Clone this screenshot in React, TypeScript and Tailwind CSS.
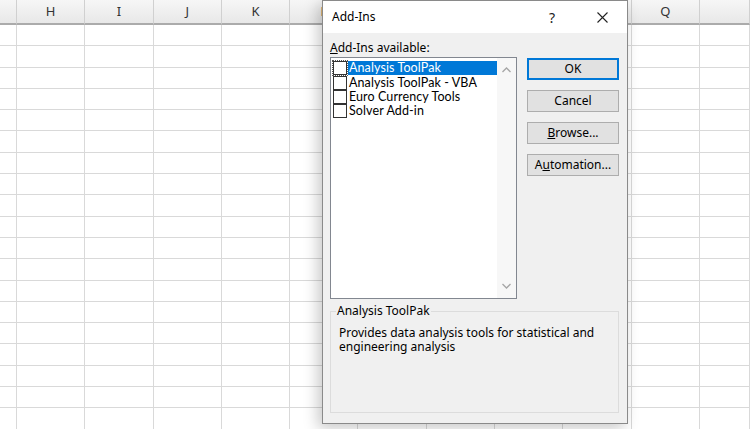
const cols = ["G", "H", "I", "J", "K", "L", "M", "N", "O", "P", "Q", "R"];
const rows = Array.from({ length: 19 }, (_, i) => i);

const items = ["Analysis ToolPak", "Analysis ToolPak - VBA", "Euro Currency Tools", "Solver Add-in"];

function Sheet() {
    return (
        <div className="grid grid-cols-[17px_repeat(10,68.3px)_1fr] auto-rows-[21.3px] grid-rows-[25px]">
            {cols.map((c, i) => (
                <div
                    key={c}
                    className="h-[25px] flex items-center justify-center bg-gradient-to-b from-[#f6f6f6] to-[#e8e8e8] border-r border-[#d0d0d0] border-b-2 border-b-[#ababab] text-[13px] text-[#333]"
                >
                    {i > 0 && i < 11 ? c : ""}
                </div>
            ))}
            {rows.map(r =>
                cols.map(c => <div key={c + r} className="border-r border-b border-[#d9d9d9] bg-white" />)
            )}
        </div>
    );
}

function Btn({ children, primary }: { children: React.ReactNode; primary?: boolean }) {
    return (
        <button
            className={
                primary
                    ? "h-[22px] w-[92px] bg-[#e1e1e1] border-2 border-[#0078d7] text-[12px] text-black"
                    : "h-[22px] w-[92px] bg-[#e1e1e1] border border-[#adadad] text-[12px] text-black"
            }
        >
            {children}
        </button>
    );
}

function Chevron({ up }: { up?: boolean }) {
    return (
        <svg width="9" height="6" viewBox="0 0 9 6" className="block">
            <path
                d={up ? "M0.5 5 L4.5 1 L8.5 5" : "M0.5 1 L4.5 5 L8.5 1"}
                fill="none"
                stroke="#a6a6a6"
                strokeWidth="1.3"
            />
        </svg>
    );
}

function Dialog() {
    return (
        <div className="absolute left-[322px] top-0 w-[306px] h-[424px] bg-[#f0f0f0] border border-[#8a8a8a] shadow-[-4px_4px_14px_rgba(0,0,0,0.22)] flex flex-col">
            <div className="h-[32px] bg-white flex items-center pl-[9px] text-[12px] text-black">
                <span className="flex-1">Add-Ins</span>
                <span className="w-[50px] text-center text-[14px] text-[#222]">?</span>
                <span className="w-[50px] flex justify-center">
                    <svg width="11" height="11" viewBox="0 0 11 11">
                        <path d="M0.5 0.5 L10.5 10.5 M10.5 0.5 L0.5 10.5" stroke="#222" strokeWidth="1.1" />
                    </svg>
                </span>
            </div>
            <div className="flex-1 flex flex-col px-[7px] pr-[8px]">
                <div className="h-[24px] flex items-end pb-[3px] text-[12px] text-black leading-none">
                    <span><span className="underline">A</span>dd-Ins available:</span>
                </div>
                <div className="flex gap-[10px]">
                    <div className="w-[187px] h-[242px] bg-white border border-[#828790] flex">
                        <div className="flex-1 pt-[3px] pl-[2px]">
                            {items.map((t, i) => (
                                <div key={t} className="h-[14.4px] flex items-center">
                                    <div
                                        className={
                                            i === 0
                                                ? "w-[14px] h-[14px] border border-[#333] bg-white outline-1 outline-dotted outline-[#555]"
                                                : "w-[14px] h-[14px] border border-[#333] bg-white"
                                        }
                                    />
                                    <div
                                        className={
                                            i === 0
                                                ? "flex-1 ml-[1px] h-[14px] bg-[#0078d7] text-white font-['Lato',sans-serif] text-[12.5px] leading-[14px] pl-[1px] tracking-[0.1px]"
                                                : "flex-1 ml-[1px] h-[14px] text-black font-['Lato',sans-serif] text-[12.5px] leading-[14px] pl-[1px] tracking-[0.1px]"
                                        }
                                    >
                                        {t}
                                    </div>
                                </div>
                            ))}
                        </div>
                        <div className="w-[19px] bg-[#f7f7f7] flex flex-col items-center justify-between py-[9px]">
                            <Chevron up />
                            <Chevron />
                        </div>
                    </div>
                    <div className="flex flex-col gap-[10px] pt-[1px]">
                        <Btn primary>OK</Btn>
                        <Btn>Cancel</Btn>
                        <Btn>
                            <span className="underline">B</span>rowse...
                        </Btn>
                        <Btn>
                            A<span className="underline">u</span>tomation...
                        </Btn>
                    </div>
                </div>
                <div className="relative mt-[12px] h-[102px] border border-[#dcdcdc]">
                    <span className="absolute -top-[9px] left-[5px] px-[1px] bg-[#f0f0f0] text-[12px] leading-[16px] text-black">
                        Analysis ToolPak
                    </span>
                    <p className="pt-[14px] px-[8px] text-[12px] leading-[14px] text-black">
                        Provides data analysis tools for statistical and engineering analysis
                    </p>
                </div>
            </div>
        </div>
    );
}

export default function App() {
    return (
        <div className="relative w-[750px] h-[429px] overflow-hidden bg-white font-['Noto_Sans',sans-serif]">
            <Sheet />
            <Dialog />
        </div>
    );
}
